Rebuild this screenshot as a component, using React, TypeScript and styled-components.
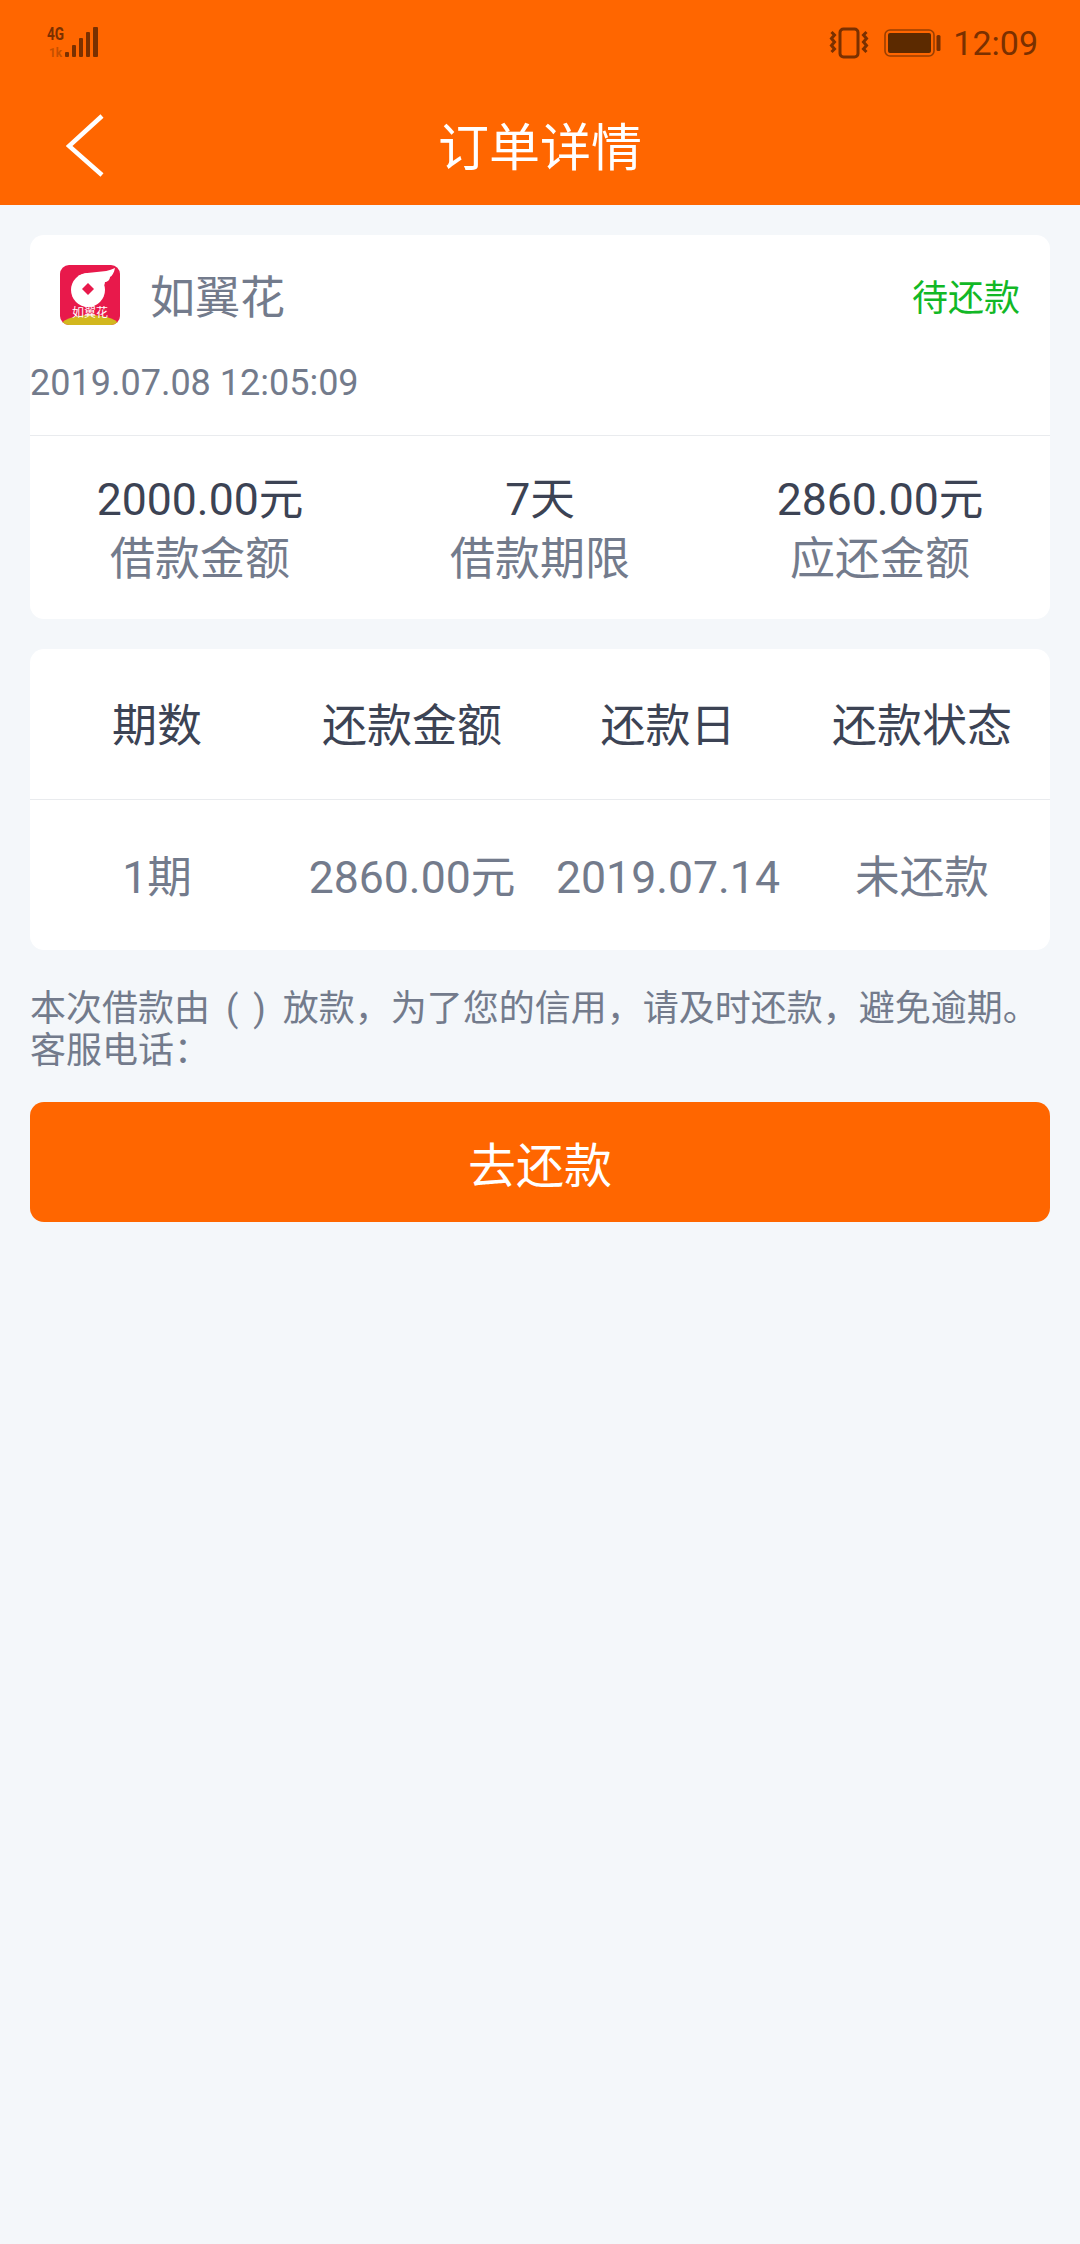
import React, { FC } from "react";
import styled, { createGlobalStyle } from "styled-components";

const GlobalStyle = createGlobalStyle`
  html, body {
    margin: 0;
    padding: 0;
    background: #f4f7fa;
    font-family: Roboto, "Noto Sans CJK SC", sans-serif;
  }
`;

const Page = styled.div`
  width: 1080px;
  height: 2244px;
  background: #f4f7fa;
  overflow: hidden;
`;

const Header = styled.header`
  height: 205px;
  background: #ff6600;
  display: flex;
  flex-direction: column;
`;

const StatusBar = styled.div`
  height: 86px;
  padding: 0 42px 0 47px;
  display: flex;
  align-items: center;
  justify-content: space-between;
`;

const StatusRight = styled.div`
  display: flex;
  align-items: center;
  gap: 12px;
  color: #7a3000;
  font-size: 34px;
  line-height: 40px;
`;

const SignalSvg = styled.svg`
  overflow: visible;
`;

const VibrateSvg = styled.svg`
  margin-right: 3px;
`;

const NavBar = styled.div`
  flex: 1;
  position: relative;
  display: flex;
  align-items: flex-start;
  justify-content: center;
  padding-top: 33px;
`;

const BackIcon = styled.svg`
  position: absolute;
  left: 66px;
  top: 27px;
`;

const Title = styled.h1`
  margin: 0;
  color: #fff;
  font-size: 51px;
  line-height: 60px;
  font-weight: 400;
`;

const Content = styled.main`
  padding: 30px 30px 0;
  display: flex;
  flex-direction: column;
  gap: 30px;
`;

const Card = styled.section`
  background: #fff;
  border-radius: 14px;
  overflow: hidden;
`;

const SummaryTop = styled.div`
  height: 201px;
  border-bottom: 1px solid #e9ebee;
  box-sizing: border-box;
`;

const BrandRow = styled.div`
  height: 119px;
  padding: 0 30px;
  display: flex;
  align-items: center;
`;

const BrandName = styled.span`
  margin-left: 30px;
  flex: 1;
  font-size: 45px;
  color: #737b8c;
`;

const Status = styled.span`
  font-size: 36px;
  color: #12b826;
`;

const DateText = styled.div`
  margin-top: 8px;
  font-size: 36px;
  line-height: 42px;
  color: #737b8c;
`;

const Stats = styled.div`
  display: grid;
  grid-template-columns: repeat(3, 1fr);
  height: 183px;
`;

const Stat = styled.div`
  display: flex;
  flex-direction: column;
  align-items: center;
  padding-top: 36px;
`;

const StatValue = styled.div`
  font-size: 44.6px;
  line-height: 56px;
  color: #3c4354;
`;

const StatLabel = styled.div`
  font-size: 45px;
  line-height: 60px;
  margin-top: 2px;
  color: #737b8c;
`;

const TableRow = styled.div<{ $head?: boolean }>`
  display: grid;
  grid-template-columns: 254px 256px 256px 252px;
  height: 150px;
  box-sizing: ${(p) => (p.$head ? "content-box" : "border-box")};
  padding-top: ${(p) => (p.$head ? "0" : "6px")};
  align-items: center;
  text-align: center;
  font-size: ${(p) => (p.$head ? "45px" : "44.6px")};
  line-height: 60px;
  color: ${(p) => (p.$head ? "#3c4354" : "#737b8c")};
  border-bottom: ${(p) => (p.$head ? "1px solid #e9ebee" : "none")};
`;

const HeadCell = styled.div`
  padding-top: 6px;
`;

const Note = styled.div`
  margin: 8px 0 0;
  font-size: 36px;
  line-height: 42px;
  color: #737b8c;
`;

const NoteLine = styled.div`
  white-space: nowrap;
`;

const Paren = styled.span`
  display: inline-block;
  margin: 0 17px 0 16px;
  word-spacing: 6px;
`;

const PayButton = styled.button`
  height: 120px;
  border: none;
  border-radius: 14px;
  background: #ff6600;
  color: #fff;
  font-family: inherit;
  font-size: 48px;
`;

const SignalIcon: FC = () => (
  <SignalSvg width="52" height="34" viewBox="0 0 52 34">
    <text x="0" y="14" fontFamily="Roboto" fontWeight="700" fontSize="19" textLength="17" lengthAdjust="spacingAndGlyphs" fill="#7a3000">4G</text>
    <text x="2" y="31" fontFamily="Roboto" fontWeight="700" fontSize="13" textLength="13" lengthAdjust="spacingAndGlyphs" fill="#c45000">1k</text>
    <g fill="#7a3000">
      <rect x="18" y="26" width="4" height="5" rx="1" />
      <rect x="25" y="19" width="4" height="12" rx="1" />
      <rect x="32" y="12" width="4" height="19" rx="1" />
      <rect x="39" y="6" width="4" height="25" rx="1" />
      <rect x="46" y="1" width="5" height="30" rx="1" />
    </g>
  </SignalSvg>
);

const VibrateIcon: FC = () => (
  <VibrateSvg width="40" height="32" viewBox="0 0 40 32" fill="none" stroke="#7a3000" strokeWidth="3">
    <rect x="11" y="2" width="18" height="28" rx="3.5" />
    <path d="M2.5 5l3 3-3 3.5 3 3.5-3 3.5 3 3.5-3 3" />
    <path d="M37.5 5l-3 3 3 3.5-3 3.5 3 3.5-3 3.5 3 3" />
  </VibrateSvg>
);

const BatteryIcon: FC = () => (
  <svg width="57" height="28" viewBox="0 0 57 28">
    <rect x="1" y="1" width="49" height="26" rx="5" fill="none" stroke="#9a3f00" strokeWidth="1.6" />
    <rect x="4" y="4" width="43" height="20" rx="2" fill="#5c2a00" />
    <rect x="52.5" y="6" width="4" height="16" rx="1.5" fill="#7a3000" />
  </svg>
);

const AppLogo: FC = () => (
  <svg width="60" height="60" viewBox="0 0 60 60">
    <defs>
      <clipPath id="logo-clip">
        <rect width="60" height="60" rx="9" />
      </clipPath>
    </defs>
    <g clipPath="url(#logo-clip)">
      <rect width="60" height="60" fill="#e8194b" />
      <ellipse cx="30" cy="62" rx="30" ry="12" fill="#d2b71e" />
      <circle cx="28" cy="25" r="17" fill="#fff" />
      <path d="M18 11 C30 5 44 9 55 3 C54 8 52 11 50 12 C50 15 47 17 45 17 C45 20 43 22 42 23 L34 14Z" fill="#fff" />
      <rect x="23.75" y="19.75" width="8.5" height="8.5" transform="rotate(45 28 24)" fill="#e8194b" />
      <text x="30" y="52" textAnchor="middle" fontSize="12" fill="#fff" fontFamily="'Noto Sans CJK SC'">如翼花</text>
    </g>
  </svg>
);

const stats = [
  { value: "2000.00元", label: "借款金额" },
  { value: "7天", label: "借款期限" },
  { value: "2860.00元", label: "应还金额" },
];

const heads = ["期数", "还款金额", "还款日", "还款状态"];
const cells = ["1期", "2860.00元", "2019.07.14", "未还款"];

const App: FC = () => {
  return (
    <Page>
      <GlobalStyle />
      <Header>
        <StatusBar>
          <SignalIcon />
          <StatusRight>
            <VibrateIcon />
            <BatteryIcon />
            <span>12:09</span>
          </StatusRight>
        </StatusBar>
        <NavBar>
          <BackIcon width="40" height="66" viewBox="0 0 40 66" fill="none" stroke="#fff" strokeWidth="4.5">
            <path d="M36 3L3 33l33 29" />
          </BackIcon>
          <Title>订单详情</Title>
        </NavBar>
      </Header>
      <Content>
        <Card>
          <SummaryTop>
            <BrandRow>
              <AppLogo />
              <BrandName>如翼花</BrandName>
              <Status>待还款</Status>
            </BrandRow>
            <DateText>2019.07.08 12:05:09</DateText>
          </SummaryTop>
          <Stats>
            {stats.map((s) => (
              <Stat key={s.label}>
                <StatValue>{s.value}</StatValue>
                <StatLabel>{s.label}</StatLabel>
              </Stat>
            ))}
          </Stats>
        </Card>
        <Card>
          <TableRow $head>
            {heads.map((h) => (
              <HeadCell key={h}>{h}</HeadCell>
            ))}
          </TableRow>
          <TableRow>
            {cells.map((c) => (
              <div key={c}>{c}</div>
            ))}
          </TableRow>
        </Card>
        <Note>
          <NoteLine>
            本次借款由<Paren>( )</Paren>放款，为了您的信用，请及时还款，避免逾期。
          </NoteLine>
          <NoteLine>客服电话：</NoteLine>
        </Note>
        <PayButton>去还款</PayButton>
      </Content>
    </Page>
  );
};

export default App;
